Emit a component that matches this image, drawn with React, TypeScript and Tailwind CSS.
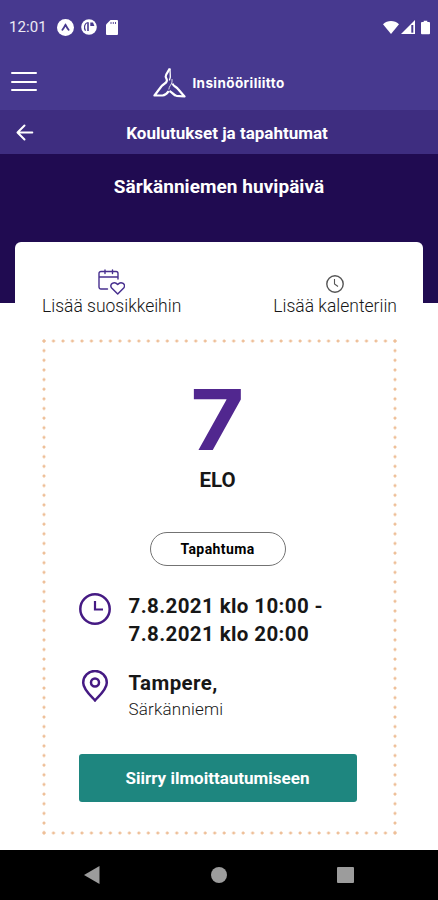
import type { ReactNode } from 'react';

function StatusBar() {
  return (
    <div className="flex h-[54px] items-center pl-[9px] pr-2 text-white">
      <span className="w-[37px] whitespace-nowrap text-[15px] leading-none text-white/90 tracking-[0.1px]">12:01</span>
      <svg className="ml-[11px] h-[17px] w-[17px]" viewBox="0 0 16 16">
        <circle cx="8" cy="8" r="8" fill="#fff" />
        <path d="M5 10.300C6.300 9 7 7 8 5.500c1 1.500 1.700 3.500 3 4.800" fill="none" stroke="#47398f" strokeWidth="1.600" strokeLinecap="round" />
      </svg>
      <svg className="ml-[7px] h-4 w-4" viewBox="0 0 16 16">
        <circle cx="8" cy="8" r="7.800" fill="#fff" />
        <path d="M6.500 3.500C3.300 4.500 2.700 9 4.500 11.800" fill="none" stroke="#47398f" strokeWidth="1.200" />
        <path d="M6.200 3.300h1.600V12H6.200zM9.300 3.400h2.700l1.400 3.600H9.300z" fill="#47398f" />
      </svg>
      <svg className="ml-[9px] h-[15px] w-3" viewBox="0 0 12 15">
        <path d="M4.500 0H11a1 1 0 0 1 1 1v13a1 1 0 0 1-1 1H1a1 1 0 0 1-1-1V4.500z" fill="#fff" />
        <path d="M5 2v2M7.300 2v2M9.500 2v2" stroke="#47398f" strokeWidth="0.900" />
      </svg>
      <div className="ml-auto flex items-center">
        <svg className="h-[13px] w-4" viewBox="0 0 16 13">
          <path d="M0 3.200C4.500-1 11.500-1 16 3.200L8 13z" fill="#fff" />
        </svg>
        <svg className="ml-[2px] h-[14px] w-[14px]" viewBox="0 0 14 14">
          <path d="M14 0v14H0z" fill="#fff" />
          <path d="M11.300 5v7.700" stroke="#47398f" strokeWidth="2" />
        </svg>
        <svg className="ml-[6px] h-[15px] w-[9px]" viewBox="0 0 10 15">
          <path d="M3 0h4v1.500h2a1 1 0 0 1 1 1V14a1 1 0 0 1-1 1H1a1 1 0 0 1-1-1V2.500a1 1 0 0 1 1-1h2z" fill="#fff" />
        </svg>
      </div>
    </div>
  );
}

function Logo() {
  return (
    <div className="flex items-center gap-[6px] text-white">
      <svg className="h-[31px] w-[33px]" viewBox="0 0 33 31" fill="none" stroke="currentColor" strokeLinejoin="round">
        <path d="M16.800 1.500C15.500 4 12.700 7 12.700 9.500c0 1.700 1.500 2 1.100 4.500-.4 2.500-3.800 3-5.500 5.500L1.500 28.500h8c3.500-.3 4.500-2 6.200-4.500" strokeWidth="2.200" />
        <path d="M17 1.500l.3 8c.2 2-1 2.500-.8 4" strokeWidth="1.300" />
        <path d="M19 12v3c-.5 3-3 4-3.200 7.500" strokeWidth="0.800" />
        <path d="M19.500 16.500c1 3 3.500 3 5.500 5.500l6.500 7.500-8-.7c-3-.7-3.500-3-7-4.800" strokeWidth="2.200" />
      </svg>
      <span className="pt-1 font-['Inter'] text-[13.500px] font-bold leading-none tracking-[0.400px]">Insinööriliitto</span>
    </div>
  );
}

function TopBar() {
  return (
    <div className="relative flex h-14 items-center justify-center">
      <button type="button" aria-label="Valikko" className="absolute left-[11px] top-[18px] flex w-[26px] flex-col gap-[6.500px]">
        <span className="h-[2px] rounded bg-white" />
        <span className="h-[2px] rounded bg-white" />
        <span className="h-[2px] rounded bg-white" />
      </button>
      <Logo />
    </div>
  );
}

function PageHeader() {
  return (
    <div className="flex h-11 items-center bg-[#3e2d80] text-white">
      <button type="button" aria-label="Takaisin" className="ml-4 w-[18px]">
        <svg className="h-[18px] w-[18px]" viewBox="0 0 18 18" fill="none" stroke="currentColor" strokeWidth="2" strokeLinecap="round" strokeLinejoin="round">
          <path d="M16.300 9.500H2M8.500 2.500l-7 7 7 7" />
        </svg>
      </button>
      <h1 className="mr-[18px] flex-1 pt-1 text-center text-[17px] font-bold">Koulutukset ja tapahtumat</h1>
    </div>
  );
}

function Action({ icon, label }: { icon: ReactNode; label: string }) {
  return (
    <button type="button" className="flex flex-col items-center whitespace-nowrap text-[17.500px] font-light leading-5 text-neutral-900">
      <span className="flex h-7 items-end">{icon}</span>
      {label}
    </button>
  );
}

function CalendarHeartIcon() {
  return (
    <svg className="mb-px h-[26px] w-[27px]" viewBox="0 0 27 26" fill="none" stroke="#48308f" strokeWidth="1.400" strokeLinecap="round" strokeLinejoin="round">
      <path d="M9.500 20H3a2 2 0 0 1-2-2V4.500a2 2 0 0 1 2-2h15a2 2 0 0 1 2 2V10M1 8h19M7 1v3.500M14.500 1v3.500" />
      <path d="M19.700 25l-6-6c-3-3.500 2.500-7.500 6-3.500 3.500-4 9 0 6 3.500z" strokeWidth="1.500" />
    </svg>
  );
}

function SmallClockIcon() {
  return (
    <svg className="mb-[3px] h-[18px] w-[18px]" viewBox="0 0 18 18" fill="none" stroke="#555">
      <circle cx="9" cy="9" r="8.200" strokeWidth="1.400" />
      <path d="M8.500 4v5l3.500 2.500" strokeWidth="1.100" />
    </svg>
  );
}

function EventCard() {
  return (
    <section className="ml-[42px] mr-[41px] flex h-[496px] flex-col items-center bg-[radial-gradient(circle_at_2px_2px,#eebf98_1.1px,transparent_1.9px),radial-gradient(circle_at_2px_2px,#eebf98_1.1px,transparent_1.9px),radial-gradient(circle_at_2px_2px,#eebf98_1.1px,transparent_1.9px),radial-gradient(circle_at_2px_2px,#eebf98_1.1px,transparent_1.9px)] bg-[length:9.486px_4px,9.486px_4px,4px_9.647px,4px_9.647px] bg-[position:0_0,0_100%,0_0,100%_0] [background-repeat:repeat-x,repeat-x,repeat-y,repeat-y] pr-1">
      <div className="mt-[38px] h-[86px] scale-x-110 font-['Inter'] text-[84px] font-bold leading-[86px] text-[#51278f]">7</div>
      <div className="mt-[3px] text-[20.500px] font-bold leading-7 text-neutral-900">ELO</div>
      <div className="mt-[38px] flex h-[34px] w-[136px] items-center justify-center rounded-full border-[1.500px] border-neutral-500 text-[14px] font-bold tracking-[0.4px] text-black">
        Tapahtuma
      </div>
      <div className="mt-[26px] w-[278px]">
        <div className="flex">
          <svg className="mt-px h-8 w-8" viewBox="0 0 32 32" fill="none" stroke="#451a83" strokeWidth="2.500">
            <circle cx="16" cy="16" r="14.700" />
            <path d="M16 8v8.500h8" strokeWidth="2.200" />
          </svg>
          <p className="ml-[18px] whitespace-nowrap text-[20.500px] font-bold leading-7 tracking-[0.400px] text-neutral-900">
            7.8.2021 klo 10:00 -<br />
            7.8.2021 klo 20:00
          </p>
        </div>
        <div className="mt-[21px] flex">
          <svg className="mt-px h-8 w-8" viewBox="0 0 32 32" fill="none" stroke="#451a83" strokeWidth="2.500">
            <path d="M16 30.500C12 26 4.200 19.500 4.200 12.800a11.800 11.800 0 0 1 23.600 0C27.800 19.500 20 26 16 30.500z" />
            <circle cx="16" cy="12.500" r="4" />
          </svg>
          <div className="ml-[18px]">
            <p className="text-[20.500px] font-bold leading-7 tracking-[0.400px] text-neutral-900">Tampere,</p>
            <p className="pt-px text-[17px] font-light leading-[23px] tracking-[0.200px] text-neutral-900">Särkänniemi</p>
          </div>
        </div>
        <button type="button" className="mt-[33px] h-[48px] w-full rounded-[3px] bg-[#1e867f] pt-px text-[17px] font-bold text-white">
          Siirry ilmoittautumiseen
        </button>
      </div>
    </section>
  );
}

function NavigationBar() {
  return (
    <nav className="flex h-[50px] items-center justify-between bg-black px-[84px] text-[#9c9c9c]">
      <svg className="h-[18px] w-4" viewBox="0 0 16 18">
        <path d="M15.500 0v18L0 9z" fill="currentColor" />
      </svg>
      <span className="h-4 w-4 rounded-full bg-[#9c9c9c]" />
      <span className="h-4 w-[17px] rounded-[1px] bg-[#9c9c9c]" />
    </nav>
  );
}

export default function App() {
  return (
    <div className="flex h-[900px] w-[438px] flex-col overflow-hidden bg-white font-['Roboto',sans-serif]">
      <header className="bg-[#47398f]">
        <StatusBar />
        <TopBar />
        <PageHeader />
      </header>
      <div className="h-[149px] shrink-0 bg-[#200b51] pt-[21px] text-center text-[19px] font-bold leading-6 tracking-[0.050px] text-white">
        Särkänniemen huvipäivä
      </div>
      <div className="mx-[15px] -mt-[61px] h-[97px] shrink-0 rounded-t-md bg-white pl-[27px] pr-[26px] pt-[26px]">
        <div className="flex justify-between">
          <Action icon={<CalendarHeartIcon />} label="Lisää suosikkeihin" />
          <Action icon={<SmallClockIcon />} label="Lisää kalenteriin" />
        </div>
      </div>
      <main className="flex-1">
        <EventCard />
      </main>
      <NavigationBar />
    </div>
  );
}
